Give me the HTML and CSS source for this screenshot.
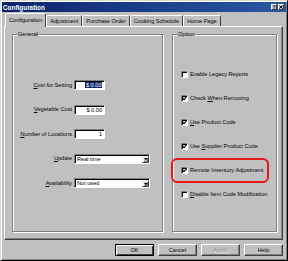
FILE: index.html
```html
<!DOCTYPE html>
<html lang="en">
<head>
    <meta charset="UTF-8">
    <title>Configuration</title>
    <link rel="stylesheet" href="styles.css">
</head>
<body>
    <div class="window">
        <div class="titlebar">
            <span class="title">Configuration</span>
            <div class="caption-btns">
                <span class="cap-btn help">?</span>
                <span class="cap-btn">
                    <svg width="5" height="4" viewBox="0 0 5 4"><path d="M0.5 0 L4.5 4 M4.5 0 L0.5 4" stroke="#000" stroke-width="1.1" fill="none"/></svg>
                </span>
            </div>
        </div>
        <div class="tabs">
            <div class="tab active">Configuration</div>
            <div class="tab">Adjustment</div>
            <div class="tab">Purchase Order</div>
            <div class="tab">Cooking Schedule</div>
            <div class="tab">Home Page</div>
        </div>
        <div class="panel">
            <div class="group general">
                <div class="group-label">General</div>
                <div class="fields">
                    <label class="field-label"><u>C</u>ost for Setting</label>
                    <div class="textbox"><span class="sel">$ 0.00</span></div>

                    <label class="field-label"><u>V</u>egetable Cost</label>
                    <div class="textbox">$ 0.00</div>

                    <label class="field-label"><u>N</u>umber of Locations</label>
                    <div class="textbox">1</div>

                    <label class="field-label"><u>U</u>pdate</label>
                    <div class="combo"><span class="combo-text">Real time</span><span class="arrow"></span></div>

                    <label class="field-label"><u>A</u>vailability</label>
                    <div class="combo"><span class="combo-text">Not used</span><span class="arrow"></span></div>
                </div>
            </div>
            <div class="group option">
                <div class="group-label">Option</div>
                <div class="checks">
                    <div class="check"><span class="box"></span><span>Enable Legacy Reports</span></div>
                    <div class="check"><span class="box checked"></span><span>Check <u>W</u>hen Removing</span></div>
                    <div class="check"><span class="box checked"></span><span><u>U</u>se Product Code</span></div>
                    <div class="check"><span class="box checked"></span><span>Use <u>S</u>upplier Product Code</span></div>
                    <div class="check marked"><span class="box checked"></span><span>Remote Inventory Adjustment</span><span class="ring"></span></div>
                    <div class="check"><span class="box"></span><span><u>D</u>isable Item Code Modification</span></div>
                </div>
            </div>
        </div>
        <div class="buttons">
            <button class="btn default">OK</button>
            <button class="btn">Cancel</button>
            <button class="btn" disabled>Apply</button>
            <button class="btn">Help</button>
        </div>
    </div>
</body>
</html>
```

FILE: styles.css
```css
body {
    margin: 0;
    background: #c0c0c0;
    font-family: "Liberation Sans", Arial, sans-serif;
    font-size: 5.6px;
    line-height: 7px;
    color: #000;
}
.window {
    width: 288px;
    height: 261px;
    box-sizing: border-box;
    border: 1px solid;
    border-color: #dcdcdc #000 #000 #dcdcdc;
    box-shadow: inset 1px 1px #fff, inset -1px -1px #808080;
    padding: 1px;
    display: flex;
    flex-direction: column;
    background: #c0c0c0;
}

.titlebar {
    height: 10px;
    display: flex;
    align-items: center;
    justify-content: space-between;
    padding: 0 2px 0 1px;
    background: linear-gradient(to right, #0a246a, #2a58a4);
    color: #fff;
}
.title {
    font-weight: bold;
    font-size: 6.4px;
}
.caption-btns {
    display: flex;
    gap: 1px;
}
.cap-btn {
    width: 6px;
    height: 6px;
    box-sizing: border-box;
    background: #c0c0c0;
    border: 1px solid;
    border-color: #fff #404040 #404040 #fff;
    display: flex;
    align-items: center;
    justify-content: center;
    color: #000;
}
.cap-btn.help {
    font-weight: bold;
    font-size: 5px;
    line-height: 4px;
}
.cap-btn svg {
    display: block;
}

.tabs {
    height: 14px;
    display: flex;
    align-items: flex-end;
    padding-left: 3px;
}
.tab {
    height: 11px;
    box-sizing: border-box;
    padding: 2px 3px 0;
    border-top: 1px solid #fff;
    border-left: 1px solid #fff;
    border-right: 1px solid #404040;
    border-radius: 2px 2px 0 0;
    white-space: nowrap;
}
.tab.active {
    height: 14px;
    padding-top: 3px;
    position: relative;
    margin-bottom: -1px;
    background: #c0c0c0;
    z-index: 1;
}

.panel {
    flex: 1;
    margin: 0 3px 0 2px;
    border: 1px solid;
    border-color: #fff #404040 #404040 #fff;
    box-shadow: inset -1px -1px #808080;
    padding: 7px 5px 7px 7px;
    display: flex;
    gap: 9px;
}

.group {
    border: 1px solid #808080;
    box-shadow: 1px 1px #fff, inset 1px 1px #fff;
}
.group.general {
    width: 151px;
    box-sizing: border-box;
}
.group.option {
    width: 105px;
    box-sizing: border-box;
    padding-left: 8px;
}
.group-label {
    width: fit-content;
    margin: -4px 0 0 4px;
    padding: 0 1px;
    background: #c0c0c0;
}
.group.option .group-label {
    margin-left: -4px;
}

.fields {
    margin-top: 42px;
    display: grid;
    grid-template-columns: 59px 76px;
    column-gap: 2px;
    row-gap: 14.5px;
    align-items: center;
}
.field-label {
    text-align: right;
    white-space: nowrap;
}
.textbox {
    width: 31px;
    height: 10px;
    box-sizing: border-box;
    background: #fff;
    border: 1px solid;
    border-color: #808080 #fff #fff #808080;
    box-shadow: inset 1px 1px #000;
    text-align: right;
    padding: 1px 2px 0 0;
}
.sel {
    background: #0a246a;
    color: #fff;
    padding: 0 0.5px;
}
.combo {
    height: 10px;
    box-sizing: border-box;
    background: #fff;
    border: 1px solid;
    border-color: #808080 #fff #fff #808080;
    box-shadow: inset 1px 1px #000;
    display: flex;
    padding: 1px 0 0 1px;
}
.combo-text {
    flex: 1;
    padding: 0 1px;
    line-height: 7px;
}
.arrow {
    width: 7px;
    height: 7px;
    box-sizing: border-box;
    background: #c0c0c0;
    border: 1px solid;
    border-color: #dcdcdc #404040 #404040 #dcdcdc;
    box-shadow: inset 1px 1px #fff, inset -1px -1px #808080;
    display: flex;
    align-items: center;
    justify-content: center;
}
.arrow::after {
    content: "";
    border-left: 2px solid transparent;
    border-right: 2px solid transparent;
    border-top: 2px solid #000;
}

.checks {
    margin-top: 32px;
    display: flex;
    flex-direction: column;
    gap: 16px;
}
.check {
    height: 8px;
    display: flex;
    align-items: center;
    gap: 2px;
    white-space: nowrap;
}
.box {
    width: 7px;
    height: 7px;
    box-sizing: border-box;
    background: #fff;
    border: 1px solid;
    border-color: #808080 #fff #fff #808080;
    box-shadow: inset 1px 1px #000;
    flex-shrink: 0;
}
.box.checked {
    background: #fff url("data:image/svg+xml,%3Csvg xmlns='http://www.w3.org/2000/svg' width='5' height='5' viewBox='0 0 5 5'%3E%3Cpath d='M0.8 2.2 L2 3.6 L4.4 0.9' stroke='%23000' stroke-width='1.1' fill='none'/%3E%3C/svg%3E") no-repeat 0 0;
}
.check.marked {
    position: relative;
}
.ring {
    position: absolute;
    left: -10px;
    top: -8px;
    width: 98px;
    height: 25px;
    box-sizing: border-box;
    border: 2px solid #e01818;
    border-radius: 6px;
}

.buttons {
    display: flex;
    justify-content: flex-end;
    gap: 4px;
    margin: 4px 3px 3px 0;
}
.btn {
    width: 39px;
    height: 12px;
    box-sizing: border-box;
    margin: 0;
    padding: 0;
    font: inherit;
    color: #000;
    background: #c0c0c0;
    border: 1px solid;
    border-color: #fff #404040 #404040 #fff;
    box-shadow: inset -1px -1px #808080;
}
.btn.default {
    border-color: #000;
    box-shadow: inset 1px 1px #fff, inset -1px -1px #404040;
}
.btn:disabled {
    color: #808080;
    text-shadow: 0.5px 0.5px #fff;
}
```
